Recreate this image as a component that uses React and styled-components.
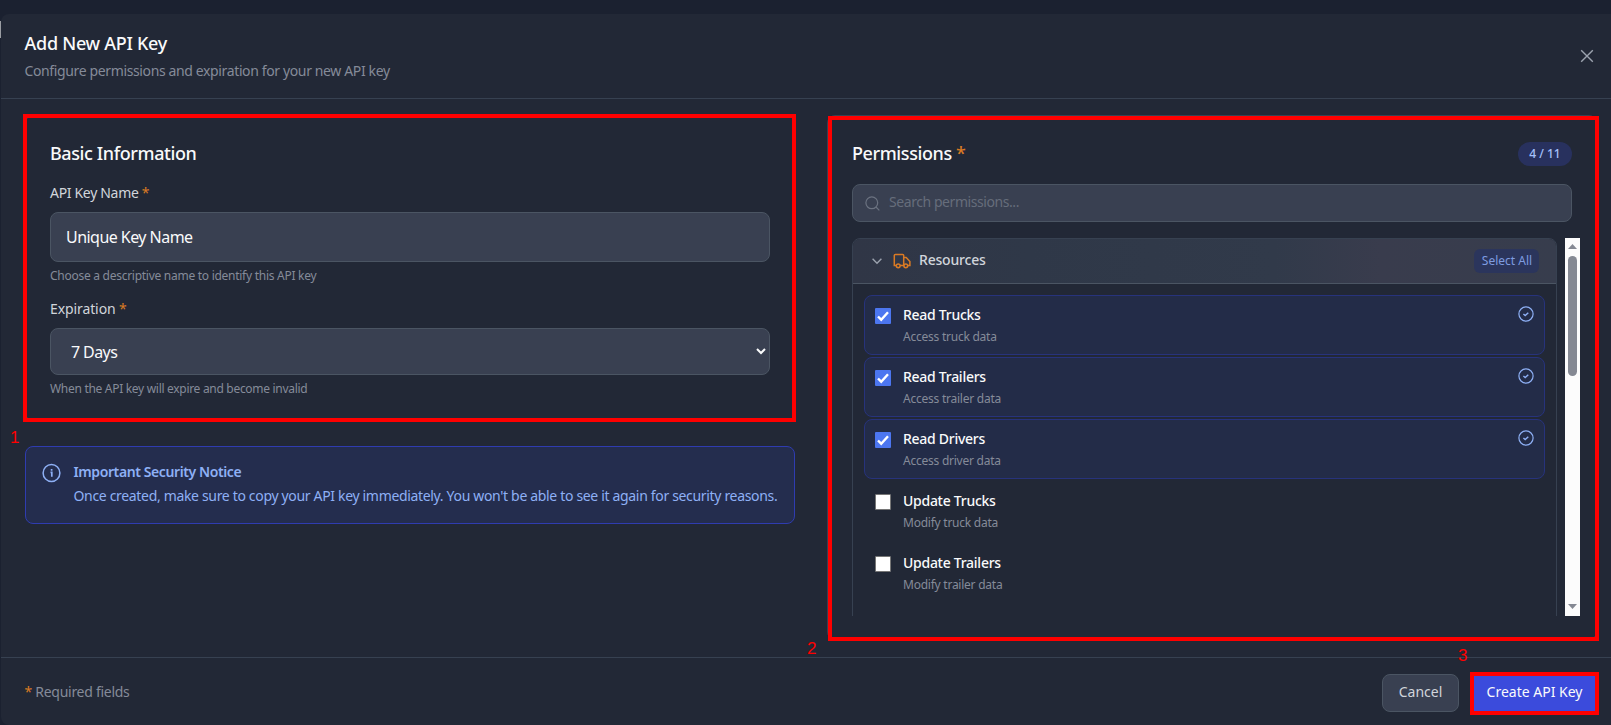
import React, { useState } from 'react';
import styled, { createGlobalStyle } from 'styled-components';

const GlobalStyle = createGlobalStyle`
	*{box-sizing: border-box}
	html, body, #root{height: 100%}
	body{margin: 0; overflow: hidden; background: #1b2130; font-family: "Noto Sans", "Open Sans", sans-serif; font-size: 14px; color: #f9fafb}
	h2, h3, p{margin: 0; font-weight: 400}
	button, input, select{font-family: inherit; margin: 0}
`;

const Page = styled.div`
	height: 725px; padding: 14px 0 0 1px; position: relative;
`;

const Sliver = styled.div`
	position: absolute; left: 0; top: 21px; width: 1px; height: 17px; background: #9a9da3;
`;

const Modal = styled.div`
	height: 711px; display: flex; flex-direction: column; background: #222836; border-radius: 8px 0 0 8px;
`;

const Text = styled.span`
	display: block; white-space: nowrap;
	font-size: ${p => p.$size || 14}px;
	line-height: ${p => p.$line || 20}px;
	font-weight: ${p => p.$weight || 400};
	color: ${p => p.$color || '#f9fafb'};
	letter-spacing: ${p => p.$track || 0}px;
`;

const Star = styled.span`
	color: #d97a24;
`;

const Header = styled.header`
	height: 85px; flex: none; padding: 15px 14px 0 23.5px; display: flex; justify-content: space-between; border-bottom: 1px solid #374151;
`;

const CloseBtn = styled.button`
	width: 20px; height: 20px; margin-top: 17px; padding: 0; background: none; border: 0; color: #9ca3af; display: flex; align-items: center; justify-content: center;
`;

const Body = styled.main`
	flex: none; height: 558px; padding: 16px 14px 0 24px; display: grid; grid-template-columns: 770px 770px; grid-gap: 32px; align-items: start;
`;

const Card = styled.section`
	height: ${p => p.$height}px; padding: 23px 24px; border: 1px solid #374151; border-radius: 8px; position: relative;
`;

/* numbered callouts drawn over the form */
const Mark = styled.div`
	position: absolute; border: 4px solid #ff0000; pointer-events: none; z-index: 2;
	inset: ${p => p.$inset};
`;

const MarkNumber = styled.span`
	position: absolute; z-index: 2; color: #ff0000; font: 17px/18px "Liberation Sans", sans-serif;
	left: ${p => p.$left}px; top: ${p => p.$top}px;
`;

const Field = styled.div`
	display: flex; flex-direction: column;
	margin-top: ${p => p.$top}px;
`;

const Input = styled.input`
	height: 50px; margin: 9px 0 6px; padding: 0 15px; background: #394051; border: 1px solid #4b5563; border-radius: 8px; color: #f9fafb; font-size: 16px; letter-spacing: ${p => p.$track}px; outline: none;
`;

const Select = styled.select`
	height: 47px; margin: 9px 0 6px; padding: 0 0 0 16px; background: #394051; border: 1px solid #4b5563; border-radius: 8px; color: #f9fafb; font-size: 16px; letter-spacing: ${p => p.$track}px; outline: none;
`;

const Notice = styled.div`
	height: 78px; margin-top: 25px; padding: 15px 16px; display: flex; gap: 11.5px; background: #242d4e; border: 1px solid #2f3cb0; border-radius: 8px; color: #8eb0f5;
	svg{margin: 0; flex: none}
`;

const CardHead = styled.div`
	height: 24px; margin-top: 3px; display: flex; align-items: center; justify-content: space-between;
	h3{margin-top: -2px}
`;

const Badge = styled.span`
	width: 54px; height: 24px; border-radius: 12px; background: #28315e; display: flex; align-items: center; justify-content: center;
`;

const Search = styled.label`
	height: 38px; margin-top: 18px; padding: 0 12px; display: flex; align-items: center; gap: 9px; background: #394051; border: 1px solid #4b5563; border-radius: 8px; color: #6b7280;
	input{flex: 1; background: none; border: 0; outline: none; padding: 0 0 4px; font-size: 14px; color: #f9fafb; letter-spacing: ${p => p.$track}px}
	input::placeholder{color: #666d7b; opacity: 1}
`;

const ScrollArea = styled.div`
	height: 378px; margin: 16px -8px 0 0; display: flex; justify-content: space-between;
`;

const ListClip = styled.div`
	width: 705px; height: 378px; overflow: hidden;
`;

const Group = styled.div`
	height: 760px; border: 1px solid #374151; border-radius: 8px; overflow: hidden;
`;

const GroupHead = styled.div`
	height: 45px; padding: 0 17px 0 18px; display: flex; align-items: center; border-bottom: 1px solid #4b5563; background: linear-gradient(90deg, #303646 0%, #2f3848 25%, #313a4a 60%, #393c4d 75%, #373d4d 100%);
	svg:first-child{margin-right: 10px}
	svg + span{margin: -2px 0 0 8px}
`;

const SelectAll = styled.button`
	width: 65px; height: 24px; margin-left: auto; padding: 0 0 0 1px; border: 0; border-radius: 6px; background: #2b355c; display: flex; align-items: center; justify-content: center;
`;

const Items = styled.div`
	padding: 11px; display: flex; flex-direction: column; gap: 2px;
`;

const Item = styled.label`
	height: 60px; padding: 9px 10px; display: flex; align-items: flex-start; border-radius: 8px;
	border: 1px solid ${p => p.$on ? '#27337c' : 'transparent'};
	background: ${p => p.$on ? '#232c48' : 'transparent'};
	svg{margin: 1px 0 0 auto; color: #8eb0f5}
`;

const Check = styled.span`
	width: 16px; height: 16px; margin: 3px 12px 0 0; flex: none; display: flex; border-radius: 1px;
	background: ${p => p.$on ? '#4c76f0' : '#ffffff'};
	border: ${p => p.$on ? '0' : '1px solid #767676'};
	svg{margin: 0; color: #ffffff}
`;

const Scrollbar = styled.div`
	width: 15px; height: 378px; padding: 6px 0 7px; background: #fcfcfc; display: flex; flex-direction: column; align-items: center;
`;

const Thumb = styled.div`
	width: 9px; height: 120px; margin: 7px 0 auto; border-radius: 5px; background: #858993;
`;

const Footer = styled.footer`
	flex: 1; padding: 0 12px 0 23.5px; border-top: 1px solid #374151; display: flex; align-items: flex-start;
`;

const Required = styled(Text)`
	margin-right: auto;
`;

const Btn = styled.button`
	height: 38px; padding: 0 0 2px; border-radius: 8px; display: flex; justify-content: center; align-items: center;
	width: ${p => p.$primary ? 129 : 77}px;
	margin: 16px 0 0 ${p => p.$primary ? 11 : 0}px;
	background: ${p => p.$primary ? '#3b4bdc' : '#394051'};
	border: 1px solid ${p => p.$primary ? '#3b4bdc' : '#4b5563'};
	position: relative;
`;

const permissions = [
	{ id: 'read-trucks', name: 'Read Trucks', info: 'Access truck data' },
	{ id: 'read-trailers', name: 'Read Trailers', info: 'Access trailer data' },
	{ id: 'read-drivers', name: 'Read Drivers', info: 'Access driver data' },
	{ id: 'update-trucks', name: 'Update Trucks', info: 'Modify truck data' },
	{ id: 'update-trailers', name: 'Update Trailers', info: 'Modify trailer data' },
];

const InfoIcon = () => (
	<svg width="20" height="22" viewBox="0 0 20 22" fill="none" stroke="currentColor" strokeWidth="1.5">
		<circle cx="9.5" cy="11" r="8.4" />
		<path d="M8.5 10.3h1.3v4.4M9.6 7v1.8" strokeWidth="1.7" />
	</svg>
);

const CheckCircle = () => (
	<svg width="16" height="16" viewBox="0 0 16 16" fill="none" stroke="currentColor" strokeWidth="1.2">
		<circle cx="8" cy="8" r="7.1" />
		<path d="M5.4 7.9l1.8 1.6 3.1-2.8" strokeWidth="1.4" />
	</svg>
);

const TruckIcon = () => (
	<svg width="18" height="16" viewBox="0 0 18 16" fill="none" stroke="#d97a24" strokeWidth="1.5">
		<path d="M3.3 12.5H1.3v-10q0-1 1-1h7.4q1 0 1 1v10M7 12.5h4M10.7 4.5h2.5l3.7 4v4h-2" />
		<circle cx="5.2" cy="12.8" r="1.9" />
		<circle cx="12.8" cy="12.8" r="1.9" />
	</svg>
);

function App() {

	const [selected] = useState(['read-trucks', 'read-trailers', 'read-drivers']);

	return (
		<Page>
			<GlobalStyle />
			<Sliver />
			<Modal>
				<Header>
					<div>
						<Text as='h2' $size={18} $line={28} $weight={500} $track={-0.27}>Add New API Key</Text>
						<Text as='p' $color='#858b99' $line={28} $track={-0.37}>Configure permissions and expiration for your new API key</Text>
					</div>
					<CloseBtn aria-label='Close'>
						<svg width="14" height="14" viewBox="0 0 14 14" stroke="currentColor" strokeWidth="1.4"><path d="M1.2 1.2l11.6 11.6M12.8 1.2L1.2 12.8" /></svg>
					</CloseBtn>
				</Header>
				<Body>
					<div>
						<Card $height={306}>
							<Mark $inset='-2px -2px -2px -3px' />
							<Text as='h3' $size={18} $line={28} $weight={500} $track={-0.4}>Basic Information</Text>
							<Field $top={16}>
								<Text $color='#d1d5db' $track={-0.32}>API Key Name <Star>*</Star></Text>
								<Input defaultValue='Unique Key Name' $track={-0.54} />
								<Text $size={12} $line={16} $color='#858b99' $track={-0.27}>Choose a descriptive name to identify this API key</Text>
							</Field>
							<Field $top={15}>
								<Text $color='#d1d5db' $track={-0.1}>Expiration <Star>*</Star></Text>
								<Select defaultValue='7' $track={-0.6}>
									<option value='7'>7 Days</option>
								</Select>
								<Text $size={12} $line={16} $color='#858b99' $track={-0.3}>When the API key will expire and become invalid</Text>
							</Field>
						</Card>
						<Notice>
							<InfoIcon />
							<div>
								<Text as='h3' $weight={600} $color='#8eb0f5' $track={-0.4}>Important Security Notice</Text>
								<Text as='p' $line={28} $color='#8eb0f5' $track={-0.33}>Once created, make sure to copy your API key immediately. You won't be able to see it again for security reasons.</Text>
							</div>
						</Notice>
					</div>
					<Card $height={525}>
						<Mark $inset='0 -3px -2px 0' />
						<CardHead>
							<Text as='h3' $size={18} $line={28} $weight={500} $track={-0.4}>Permissions <Star>*</Star></Text>
							<Badge><Text $size={12} $line={16} $weight={500} $color='#a5c0fa'>4 / 11</Text></Badge>
						</CardHead>
						<Search $track={-0.43}>
							<svg width="15" height="15" viewBox="0 0 15 15" fill="none" stroke="currentColor" strokeWidth="1.2"><circle cx="6.8" cy="6.8" r="5.9" /><path d="M11 11l3.3 3.3" /></svg>
							<input placeholder='Search permissions...' />
						</Search>
						<ScrollArea>
							<ListClip>
								<Group>
									<GroupHead>
										<svg width="12" height="12" viewBox="0 0 12 12" fill="none" stroke="#9ca3af" strokeWidth="1.4"><path d="M1.6 3.8L6 8.2l4.4-4.4" /></svg>
										<TruckIcon />
										<Text $weight={500} $color='#d1d5db' $track={-0.2}>Resources</Text>
										<SelectAll><Text $size={12} $line={16} $color='#7e9ce0'>Select All</Text></SelectAll>
									</GroupHead>
									<Items>
										{permissions.map(({ id, name, info }) => {
											const on = selected.includes(id);
											return (
												<Item key={id} $on={on}>
													<Check $on={on}>
														{on && <svg width="16" height="16" viewBox="0 0 16 16" fill="none" stroke="currentColor" strokeWidth="2.4"><path d="M3 8.5l3.2 3.2L13 4.2" /></svg>}
													</Check>
													<div>
														<Text $weight={500} $track={-0.27}>{name}</Text>
														<Text $size={12} $line={23} $color='#858b99' $track={-0.24}>{info}</Text>
													</div>
													{on && <CheckCircle />}
												</Item>
											);
										})}
									</Items>
								</Group>
							</ListClip>
							<Scrollbar>
								<svg width="9" height="5" viewBox="0 0 9 5"><path d="M0 5L4.5 0 9 5z" fill="#858993" /></svg>
								<Thumb />
								<svg width="9" height="5" viewBox="0 0 9 5"><path d="M0 0l4.5 5L9 0z" fill="#858993" /></svg>
							</Scrollbar>
						</ScrollArea>
					</Card>
				</Body>
				<Footer>
					<Required as='p' $line={68} $color='#858b99' $track={-0.28}><Star>*</Star> Required fields</Required>
					<Btn><Text $color='#d1d5db'>Cancel</Text></Btn>
					<Btn $primary>
						<Mark $inset='-3px -1px -4px -1px' />
						<Text>Create API Key</Text>
					</Btn>
				</Footer>
			</Modal>
			<MarkNumber $left={10} $top={429}>1</MarkNumber>
			<MarkNumber $left={807} $top={640}>2</MarkNumber>
			<MarkNumber $left={1458} $top={647}>3</MarkNumber>
		</Page>
	)
}

export default App;
